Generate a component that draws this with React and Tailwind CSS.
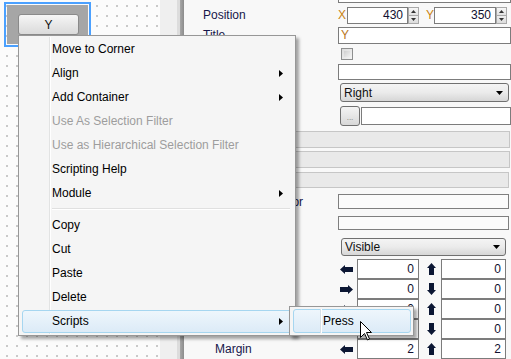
const font = "font-['Liberation_Sans',Arial,sans-serif]";

function LeftArrow() {
  return (
    <svg width="13" height="9" viewBox="0 0 13 9">
      <polygon points="0,4.5 5,0 5,2 13,2 13,7 5,7 5,9" fill="#0b1633" />
    </svg>
  );
}

function RightArrow() {
  return (
    <svg width="13" height="9" viewBox="0 0 13 9">
      <polygon points="13,4.5 8,0 8,2 0,2 0,7 8,7 8,9" fill="#0b1633" />
    </svg>
  );
}

function UpArrow() {
  return (
    <svg width="9" height="12" viewBox="0 0 9 12">
      <polygon points="4.5,0 9,5 7,5 7,12 2,12 2,5 0,5" fill="#0b1633" />
    </svg>
  );
}

function DownArrow() {
  return (
    <svg width="9" height="12" viewBox="0 0 9 12">
      <polygon points="4.5,12 9,7 7,7 7,0 2,0 2,7 0,7" fill="#0b1633" />
    </svg>
  );
}

function SubArrow() {
  return (
    <svg width="4" height="7" viewBox="0 0 4 7">
      <polygon points="0,0 4,3.5 0,7" fill="#000" />
    </svg>
  );
}

function Spinner() {
  return (
    <div className="flex flex-col w-[11px] h-full">
      <div className="flex-1 flex items-center justify-center border border-[#a9a9a9] bg-gradient-to-b from-[#f7f7f7] to-[#e2e2e2]">
        <svg width="5" height="3" viewBox="0 0 5 3"><polygon points="2.5,0 5,3 0,3" fill="#333" /></svg>
      </div>
      <div className="flex-1 flex items-center justify-center border border-t-0 border-[#a9a9a9] bg-gradient-to-b from-[#eeeeee] to-[#dcdcdc]">
        <svg width="5" height="3" viewBox="0 0 5 3"><polygon points="0,0 5,0 2.5,3" fill="#333" /></svg>
      </div>
    </div>
  );
}

function Field({ className = "", value, align = "right", color = "text-[#101030]" }) {
  return (
    <div className={`border border-[#7c7c7c] bg-white flex items-center leading-none ${align === "right" ? "justify-end pr-[4px]" : "justify-start pl-[2px]"} ${color} ${className}`}>
      {value}
    </div>
  );
}

function Dropdown({ value, className = "" }) {
  return (
    <div className={`rounded-[3px] border border-[#707070] bg-gradient-to-b from-[#f4f4f4] via-[#ebebeb] to-[#d6d6d6] flex items-center justify-between pl-[3px] pr-[5px] text-[#111] ${className}`}>
      <span>{value}</span>
      <svg width="7" height="4" viewBox="0 0 7 4"><polygon points="0,0 7,0 3.5,4" fill="#000" /></svg>
    </div>
  );
}

function Label({ children, className = "" }) {
  return <div className={`w-[154px] shrink-0 flex items-center whitespace-nowrap text-[#16164a] ${className}`}>{children}</div>;
}

function PadRow({ label, left, right, a, b }) {
  return (
    <div className="flex h-[20px]">
      <Label className="pl-[31px]">{label}</Label>
      <div className="w-[19px] flex items-center pl-[2px]">{left}</div>
      <Field className="w-[62px] h-full" value={a} />
      <div className="w-[22px] flex items-center justify-center pl-[2px]">{right}</div>
      <Field className="w-[65px] h-full" value={b} />
    </div>
  );
}

function MenuItem({ label, disabled, sub, active }) {
  return (
    <div className="relative h-[24px] flex items-center">
      {active && (
        <div className="absolute left-[3px] right-[2px] top-[1px] bottom-0 rounded-[3px] border border-[#a6d6f0] bg-gradient-to-b from-[#eef6fc] to-[#dcebf7]" />
      )}
      <span className={`relative pl-[33px] ${disabled ? "text-[#9d9d9d]" : "text-black"}`}>{label}</span>
      {sub && (
        <div className="absolute right-[12px] top-[9px]">
          <SubArrow />
        </div>
      )}
    </div>
  );
}

export default function App() {
  return (
    <div className={`relative w-[511px] h-[359px] overflow-hidden flex text-[12px] ${font}`}>
      {/* design canvas */}
      <div className="w-[160px] h-full bg-[#fbfbfb] bg-[radial-gradient(circle_at_1px_1px,#c9c9c9_1px,transparent_1px)] bg-[length:10px_10px] bg-[position:6px_5px]">
        <div className="ml-[4px] mt-[2px] w-[87px] h-[45px] border-2 border-[#4aa0ff] p-[1px]">
          <div className="w-full h-full bg-[#a6a6a6] pt-[9px] pl-[11px]">
            <div className="w-[61px] h-[21px] rounded-[3px] border border-[#8a8a8a] bg-gradient-to-b from-[#f6f6f6] to-[#dadada] flex items-center justify-center text-[#111]">
              Y
            </div>
          </div>
        </div>
      </div>
      <div className="w-[17px] h-full bg-[#efefef]" />
      <div className="w-[3px] h-full bg-[#dcdcdc]" />
      <div className="w-[4px] h-full bg-gradient-to-r from-[#a8a8a8] to-[#8c8c8c]" />

      {/* properties panel */}
      <div className="flex-1 h-full bg-[#f8f8f8] flex flex-col">
        <div className="flex h-[17px] mt-[-14px]">
          <Label />
          <Field className="w-[173px] h-full" value="" />
        </div>
        <div className="flex h-[17px] mt-[4px]">
          <Label className="pl-[19px]">Position</Label>
          <span className="w-[9px] text-[#c98210] leading-none flex items-center">X</span>
          <Field className="w-[61px] h-full" value="430" />
          <Spinner />
          <span className="ml-[7px] w-[8px] text-[#c98210] leading-none flex items-center">Y</span>
          <Field className="w-[62px] h-full" value="350" />
          <Spinner />
        </div>
        <div className="flex h-[17px] mt-[3px]">
          <Label className="pl-[19px]">Title</Label>
          <Field className="w-[173px] h-full" value="Y" align="left" color="text-[#b8761a]" />
        </div>
        <div className="flex h-[12px] mt-[4px]">
          <Label />
          <div className="ml-[3px] w-[12px] h-[12px] border border-[#8e8f8f] bg-gradient-to-br from-[#dcdcdc] to-[#f4f4f4] p-[2px]">
            <div className="w-full h-full bg-gradient-to-br from-[#cfcfcf] to-[#f0f0f0]" />
          </div>
        </div>
        <div className="flex h-[17px] mt-[4px]">
          <Label />
          <Field className="w-[173px] h-full" value="" />
        </div>
        <div className="flex h-[19px] mt-[3px]">
          <Label />
          <Dropdown value="Right" className="ml-[2px] w-[169px] h-full" />
        </div>
        <div className="flex h-[20px] mt-[4px]">
          <Label />
          <div className="ml-[2px] w-[20px] h-[20px] rounded-[3px] border border-[#707070] bg-gradient-to-b from-[#f4f4f4] to-[#d8d8d8] flex items-end justify-center pb-[3px] text-[8px] leading-none text-[#777]">
            ...
          </div>
          <Field className="ml-[1px] mt-[1px] w-[150px] h-[18px]" value="" />
        </div>
        <div className="ml-[6px] mr-[1px] h-[17px] mt-[5px] border border-[#c6c6c6] bg-[#e9e9e9]" />
        <div className="ml-[6px] mr-[1px] h-[17px] mt-[3px] border border-[#c6c6c6] bg-[#e9e9e9]" />
        <div className="ml-[6px] mr-[2px] h-[17px] mt-[4px] border border-[#c6c6c6] bg-[#e9e9e9]" />
        <div className="flex h-[15px] mt-[6px]">
          <Label className="pl-[23px] text-[#2040b8]">Background Color</Label>
          <div className="w-[171px] h-full border border-[#7f7f7f] bg-[#fbfbfb]" />
        </div>
        <div className="flex h-[14px] mt-[7px]">
          <Label />
          <div className="w-[171px] h-full border border-[#7f7f7f] bg-[#fbfbfb]" />
        </div>
        <div className="flex h-[18px] mt-[8px]">
          <Label />
          <Dropdown value="Visible" className="ml-[3px] w-[165px] h-full" />
        </div>
        <div className="mt-[3px] flex flex-col">
          <PadRow left={<LeftArrow />} right={<UpArrow />} a="0" b="0" />
          <PadRow left={<RightArrow />} right={<DownArrow />} a="0" b="0" />
          <PadRow left={<LeftArrow />} right={<UpArrow />} a="0" b="0" />
          <PadRow left={<RightArrow />} right={<DownArrow />} a="0" b="0" />
          <PadRow label="Margin" left={<LeftArrow />} right={<UpArrow />} a="2" b="2" />
        </div>
      </div>

      {/* context menu */}
      <div className="absolute left-[18px] top-[35px] w-[278px] border border-[#979797] bg-[#f5f5f5] pt-[1px] pb-[2px] shadow-[3px_3px_3px_rgba(0,0,0,0.35)]">
        <div className="absolute left-[30px] top-[1px] bottom-[1px] w-[2px] border-l border-[#e2e3e3] border-r border-r-white" />
        <MenuItem label="Move to Corner" />
        <MenuItem label="Align" sub />
        <MenuItem label="Add Container" sub />
        <MenuItem label="Use As Selection Filter" disabled />
        <MenuItem label="Use as Hierarchical Selection Filter" disabled />
        <MenuItem label="Scripting Help" />
        <MenuItem label="Module" sub />
        <div className="h-[8px] flex items-center pl-[33px] pr-[5px]">
          <div className="w-full h-[2px] border-t border-[#e0e0e0] border-b border-b-white" />
        </div>
        <MenuItem label="Copy" />
        <MenuItem label="Cut" />
        <MenuItem label="Paste" />
        <MenuItem label="Delete" />
        <MenuItem label="Scripts" sub active />
      </div>

      {/* submenu */}
      <div className="absolute left-[289px] top-[306px] w-[125px] border border-[#979797] bg-[#f5f5f5] pt-[2px] pb-[2px] shadow-[3px_3px_3px_rgba(0,0,0,0.35)]">
        <div className="relative h-[24px] flex items-center">
          <div className="absolute left-[3px] right-[2px] top-0 bottom-0 rounded-[3px] border border-[#a6d6f0] bg-gradient-to-b from-[#eef6fc] to-[#dcebf7]" />
          <div className="absolute left-[30px] top-0 bottom-0 w-[2px] border-l border-[#d6dfe6] border-r border-r-white" />
          <span className="relative pl-[33px] text-black">Press</span>
        </div>
      </div>

      {/* mouse pointer */}
      <svg className="absolute left-[360px] top-[321px]" width="13" height="20" viewBox="0 0 13 20">
        <path d="M0.5 0.5 L0.5 16.5 L4.5 12.5 L7.5 19 L9.5 18 L6.5 11.5 L11.5 11.5 Z" fill="#fff" stroke="#000" strokeWidth="1" />
      </svg>
    </div>
  );
}
